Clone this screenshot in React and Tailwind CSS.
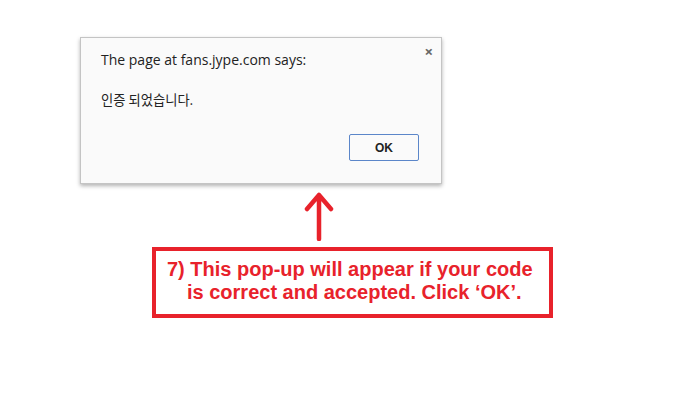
export default function App() {
  return (
    <div className="w-[674px] h-[411px] bg-white overflow-hidden">
      <div className="pt-[37px] pl-[80px]">
        <div className="relative w-[362px] h-[147px] bg-[#fafafa] border border-[#c4c4c4] shadow-[0_2px_4px_rgba(0,0,0,0.3)] font-['Open_Sans',sans-serif] text-[#222]">
          <button className="absolute right-[8px] top-[6px] text-[#666] text-[15px] font-bold leading-none">
            ×
          </button>
          <div className="pt-[12px] pl-[20px] text-[14px] leading-[20px]">
            The page at fans.jype.com says:
          </div>
          <div className="pt-[20px] pl-[20px] text-[13.3px] leading-[20px] font-['Noto_Sans_CJK_KR',sans-serif]">
            인증 되었습니다.
          </div>
          <div className="flex justify-end pr-[22px] pt-[24px]">
            <div className="w-[70px] h-[27px] border border-[#5b86c9] rounded-[2px] bg-[#fafafa] flex items-center justify-center font-['Liberation_Sans',sans-serif] font-bold text-[12px] text-[#222]">
              OK
            </div>
          </div>
        </div>
      </div>
      <div className="pl-[304px] pt-[7px]">
        <svg className="block" width="30" height="50" viewBox="0 0 30 50">
          <path
            d="M15 4 L15 48 M3 18 L15 4 L27 18"
            stroke="#e8222b"
            strokeWidth="4.5"
            fill="none"
            strokeLinecap="round"
            strokeLinejoin="round"
          />
        </svg>
      </div>
      <div className="ml-[152px] mt-[6px] w-[401px] h-[71px] border-[4px] border-[#e8222b] pt-[7px] font-['Liberation_Sans',sans-serif] font-bold text-[20px] leading-[23px] text-[#e8222b]">
        <div className="pl-[11px]">7) This pop-up will appear if your code</div>
        <div className="pl-[31px]">is correct and accepted. Click ‘OK’.</div>
      </div>
    </div>
  );
}
